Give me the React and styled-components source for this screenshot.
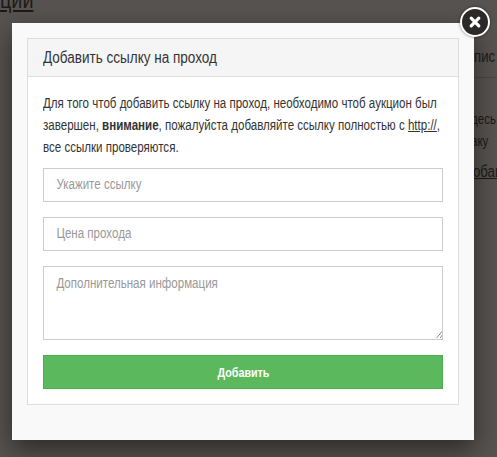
import React from "react";
import styled, { createGlobalStyle, css } from "styled-components";

// no condensed face is installed, so the text is squeezed to the reference width
const SQUEEZE = 0.825;

const narrow = css`
  transform: scaleX(${SQUEEZE});
  transform-origin: left center;
`;

const GlobalStyle = createGlobalStyle`
  * { box-sizing: border-box; }
  html, body { margin: 0; padding: 0; height: 100%; }
  body {
    background: #575350;
    font-family: "Liberation Sans", sans-serif;
    overflow: hidden;
  }
`;

export default function App() {
  return (
    <>
      <GlobalStyle />
      <Page>
        <PageTitle>ции</PageTitle>
        <SideBlock>
          <SideHead>
            <SideHeadText>пис</SideHeadText>
          </SideHead>
          <SideLine>десь</SideLine>
          <SideLine>аку</SideLine>
          <SideLink>обав</SideLink>
        </SideBlock>
      </Page>
      <Modal>
        <CloseButton aria-label="Закрыть">
          <svg width="14" height="14" viewBox="0 0 14 14">
            <path d="M3.2 3.2l7.6 7.6M10.8 3.2l-7.6 7.6" stroke="#fff" strokeWidth="3.2" strokeLinecap="round" />
          </svg>
        </CloseButton>
        <Panel>
          <PanelHeader>
            <HeaderText>Добавить ссылку на проход</HeaderText>
          </PanelHeader>
          <PanelBody>
            <Intro>
              Для того чтоб добавить ссылку на проход, необходимо чтоб аукцион был{" "}
              завершен, <b>внимание</b>, пожалуйста добавляйте ссылку полностью с{" "}
              <IntroLink href="#">http://</IntroLink>, все ссылки проверяются.
            </Intro>
            <FieldBox>
              <Field placeholder="Укажите ссылку" />
            </FieldBox>
            <FieldBox>
              <Field placeholder="Цена прохода" />
            </FieldBox>
            <AreaBox>
              <TextField placeholder="Дополнительная информация" />
            </AreaBox>
            <SubmitButton>
              <SubmitLabel>Добавить</SubmitLabel>
            </SubmitButton>
          </PanelBody>
        </Panel>
      </Modal>
    </>
  );
}

const Page = styled.div`
  height: 457px;
  overflow: hidden;
  position: relative;
  color: #1d1b1a;
`;

const PageTitle = styled.div`
  ${narrow}
  font-size: 24px;
  line-height: 24px;
  margin-top: -12px;
  text-decoration: underline;
`;

const SideBlock = styled.div`
  position: absolute;
  left: 474px;
  top: 42px;
  width: 60px;
  font-size: 14px;
  white-space: nowrap;
`;

const SideHead = styled.div`
  height: 36px;
  line-height: 30px;
  font-size: 16px;
  border-bottom: 1px solid #4a4745;
  margin-bottom: 30px;
`;

const SideHeadText = styled.div`
  ${narrow}
`;

const SideLine = styled.div`
  ${narrow}
  line-height: 22px;
  margin-left: -3px;
`;

const SideLink = styled.div`
  ${narrow}
  line-height: 22px;
  margin-top: 9px;
  margin-left: -1px;
  font-size: 16px;
  text-decoration: underline;
`;

const Modal = styled.div`
  position: absolute;
  left: 12px;
  top: 23px;
  width: 462px;
  height: 417px;
  padding: 15px;
  background: #f9f9f9;
  box-shadow: 0 10px 25px rgba(0, 0, 0, 0.5);
`;

const CloseButton = styled.button`
  position: absolute;
  right: -16px;
  top: -16px;
  width: 30px;
  height: 30px;
  padding: 0;
  border: 2px solid #fff;
  border-radius: 50%;
  background: #2b2a29;
  box-shadow: 0 0 3px rgba(0, 0, 0, 0.5);
  display: flex;
  align-items: center;
  justify-content: center;
`;

const Panel = styled.div`
  width: 432px;
  height: 367px;
  background: #fff;
  border: 1px solid #ddd;
`;

const PanelHeader = styled.div`
  height: 38px;
  padding: 0 15px;
  background: #f5f5f5;
  border-bottom: 1px solid #ddd;
  color: #333;
  font-size: 16px;
  line-height: 37px;
`;

const HeaderText = styled.div`
  ${narrow}
  transform: scaleX(0.845);
  width: 480px;
`;

const PanelBody = styled.div`
  padding: 15px;
  display: flex;
  flex-direction: column;
`;

const Intro = styled.p`
  ${narrow}
  width: 490px;
  margin: 0 0 10px;
  color: #333;
  font-size: 14px;
  line-height: 22px;
  b { font-weight: 700; }
`;

const IntroLink = styled.a`
  color: #333;
  text-decoration: underline;
`;

const FieldBox = styled.div`
  width: 400px;
  height: 34px;
  margin-bottom: 15px;
  border: 1px solid #ccc;
  background: #fff;
  overflow: hidden;
`;

const AreaBox = styled(FieldBox)`
  height: 74px;
`;

const Field = styled.input`
  ${narrow}
  display: block;
  width: 484px;
  height: 32px;
  padding: 0 15px 2px;
  border: 0;
  background: transparent;
  outline: none;
  font-family: inherit;
  font-size: 14px;
  &::placeholder { color: #999; opacity: 1; }
`;

const TextField = styled(Field).attrs({ as: "textarea" })`
  height: 72px;
  padding: 6px 15px;
  line-height: 20px;
`;

const SubmitButton = styled.button`
  display: block;
  width: 400px;
  height: 34px;
  padding: 0;
  border: 1px solid #4cae4c;
  background: #5cb85c;
  color: #fff;
  font-family: inherit;
  font-size: 13px;
  font-weight: 700;
`;

const SubmitLabel = styled.span`
  display: inline-block;
  transform: scaleX(${SQUEEZE});
`;
